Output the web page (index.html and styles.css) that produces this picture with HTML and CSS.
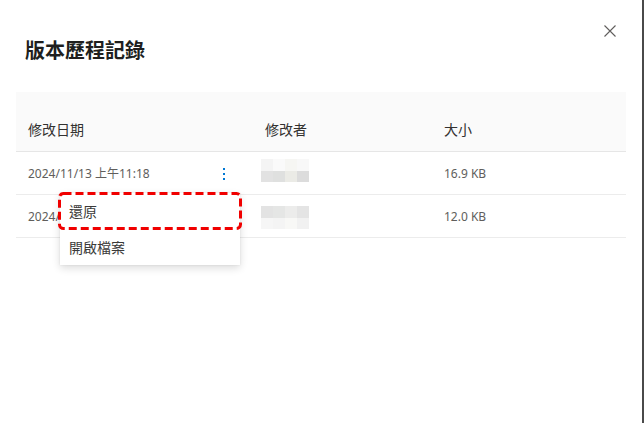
FILE: index.html
```html
<!DOCTYPE html>
<html lang="zh-Hant">
<head>
<meta charset="utf-8">
<link rel="stylesheet" href="styles.css">
</head>
<body>
<div class="dialog">
  <div class="dlg-head">
    <h1 class="title">版本歷程記錄</h1>
    <button class="close" aria-label="關閉">
      <svg width="12" height="12" viewBox="0 0 12 12"><path d="M0.5 0.5 L11.5 11.5 M11.5 0.5 L0.5 11.5" stroke="#605e5c" stroke-width="1.1" fill="none"/></svg>
    </button>
  </div>
  <div class="table">
    <div class="thead row">
      <div class="c1">修改日期</div>
      <div class="c2">修改者</div>
      <div class="c3">大小</div>
    </div>
    <div class="tr row">
      <div class="c1 datecell"><span>2024/11/13 上午11:18</span>
        <span class="kebab"><i></i><i></i><i></i></span>
      </div>
      <div class="c2"><div class="blur up">
        <i style="background:#f4f4f4"></i><i style="background:#fafafa"></i><i style="background:#f6f6f3"></i><i style="background:#f8f8f8"></i>
        <i style="background:#e2e2e2"></i><i style="background:#dfe0df"></i><i style="background:#ebebe6"></i><i style="background:#dcdcdc"></i>
      </div></div>
      <div class="c3">16.9 KB</div>
    </div>
    <div class="tr row">
      <div class="c1"><span>2024/11/12 下午03:42</span></div>
      <div class="c2"><div class="blur down">
        <i style="background:#e3e3e3"></i><i style="background:#e5e6e5"></i><i style="background:#ececeb"></i><i style="background:#e4e4e4"></i>
        <i style="background:#f6f6f6"></i><i style="background:#f4f4f4"></i><i style="background:#f8f8f6"></i><i style="background:#f1f1f1"></i>
      </div></div>
      <div class="c3">12.0 KB</div>
    </div>
  </div>
  <div class="menu">
    <div class="item">還原</div>
    <div class="item">開啟檔案</div>
    <svg class="mark" width="184" height="38" viewBox="0 0 184 38"><rect x="1.5" y="1.5" width="181" height="35" rx="4" ry="4" fill="none" stroke="#f00000" stroke-width="3" stroke-dasharray="8 4"/></svg>
  </div>
</div>
</body>
</html>
```
FILE: styles.css
```css
* { box-sizing: border-box; }
html, body { margin: 0; padding: 0; background: #fff; }
body {
  width: 644px;
  height: 423px;
  overflow: hidden;
  font-family: "Noto Sans", "Noto Sans CJK TC", sans-serif;
}
.dialog {
  position: relative;
  width: 644px;
  height: 423px;
  border-right: 2px solid #4a4a4a;
  background: #fff;
}
.dlg-head {
  display: flex;
  justify-content: space-between;
  align-items: flex-start;
  padding: 0 26px 0 25px;
  height: 92px;
}
.title {
  margin: 36px 0 0 0;
  font-family: "Noto Sans CJK TC", sans-serif;
  font-size: 20px;
  line-height: 28px;
  font-weight: 600;
  color: #201f1e;
}
.close {
  margin-top: 25px;
  padding: 0;
  border: 0;
  background: none;
  width: 12px;
  height: 12px;
  display: block;
}
.close svg { display: block; }
.table {
  margin: 0 16px;
}
.row {
  display: grid;
  grid-template-columns: 249px 179px 1fr;
  align-items: center;
}
.c1 { padding-left: 12px; }
.thead {
  background: #fafafa;
  height: 60px;
  padding-top: 15px;
  border-bottom: 1px solid #e6e6e6;
  font-family: "Noto Sans CJK TC", sans-serif;
  font-size: 14px;
  color: #323130;
}
.tr {
  height: 43px;
  border-bottom: 1px solid #ececec;
  font-size: 12px;
  color: #605e5c;
}
.datecell {
  display: flex;
  align-items: center;
  justify-content: space-between;
  padding-right: 40px;
}
.kebab {
  display: flex;
  flex-direction: column;
  gap: 3px;
  width: 2px;
  margin-top: 1px;
}
.kebab i {
  display: block;
  width: 2px;
  height: 2px;
  background: #0078d4;
}
.blur {
  display: grid;
  grid-template-columns: repeat(4, 12px);
  grid-template-rows: 12px 11px;
  width: 48px;
  margin-left: -4px;
}
.blur.up { margin-top: -6px; }
.blur.down { margin-top: 2px; }
.blur i { display: block; }
.menu {
  position: absolute;
  left: 60px;
  top: 193px;
  width: 180px;
  background: #fff;
  box-shadow: 0 3px 8px rgba(0, 0, 0, 0.14), 0 0 2px rgba(0, 0, 0, 0.08);
  font-family: "Noto Sans CJK TC", sans-serif;
  font-size: 14px;
  color: #3b3a39;
}
.item {
  height: 36px;
  line-height: 36px;
  padding-left: 9px;
}
.mark {
  position: absolute;
  left: -2px;
  top: -1px;
}
```
